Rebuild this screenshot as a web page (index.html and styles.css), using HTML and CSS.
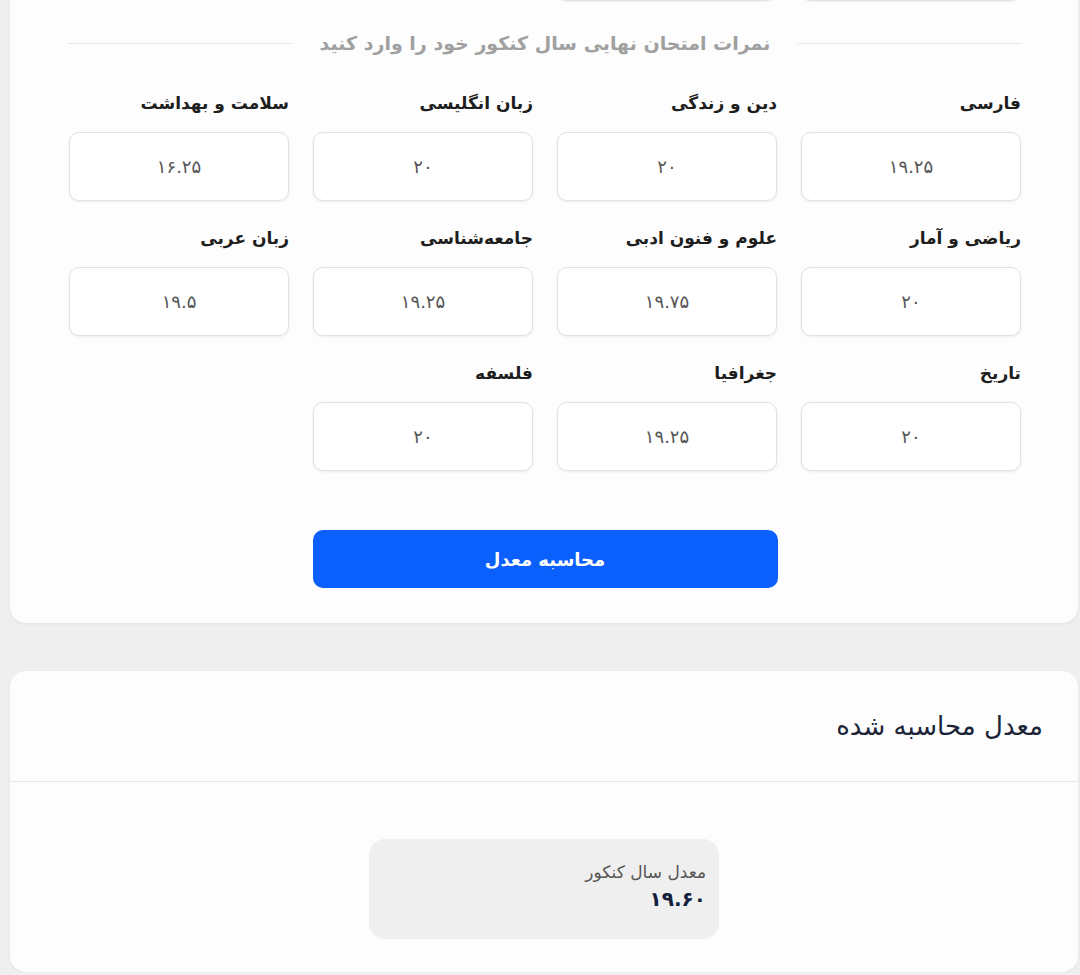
FILE: index.html
```html
<!DOCTYPE html>
<html lang="fa" dir="rtl">
<head>
<meta charset="utf-8">
<title>محاسبه معدل</title>
<link rel="stylesheet" href="styles.css">
</head>
<body>
<div class="page">
  <section class="card form-card">
    <div class="stubs">
      <div class="stub"></div>
      <div class="stub"></div>
    </div>
    <div class="divider"><span>نمرات امتحان نهایی سال کنکور خود را وارد کنید</span></div>
    <div class="grid">
      <label class="field"><span class="label">فارسی</span><input class="input" type="text" value="۱۹.۲۵"></label>
      <label class="field"><span class="label">دین و زندگی</span><input class="input" type="text" value="۲۰"></label>
      <label class="field"><span class="label">زبان انگلیسی</span><input class="input" type="text" value="۲۰"></label>
      <label class="field"><span class="label">سلامت و بهداشت</span><input class="input" type="text" value="۱۶.۲۵"></label>
      <label class="field"><span class="label">ریاضی و آمار</span><input class="input" type="text" value="۲۰"></label>
      <label class="field"><span class="label">علوم و فنون ادبی</span><input class="input" type="text" value="۱۹.۷۵"></label>
      <label class="field"><span class="label">جامعه‌شناسی</span><input class="input" type="text" value="۱۹.۲۵"></label>
      <label class="field"><span class="label">زبان عربی</span><input class="input" type="text" value="۱۹.۵"></label>
      <label class="field"><span class="label">تاریخ</span><input class="input" type="text" value="۲۰"></label>
      <label class="field"><span class="label">جغرافیا</span><input class="input" type="text" value="۱۹.۲۵"></label>
      <label class="field"><span class="label">فلسفه</span><input class="input" type="text" value="۲۰"></label>
    </div>
    <div class="actions">
      <button class="btn" type="button">محاسبه معدل</button>
    </div>
  </section>

  <section class="card result-card">
    <header class="result-head"><h2>معدل محاسبه شده</h2></header>
    <div class="result-body">
      <div class="result-box">
        <div class="result-label">معدل سال کنکور</div>
        <div class="result-value">۱۹.۶۰</div>
      </div>
    </div>
  </section>
</div>
</body>
</html>
```
FILE: styles.css
```css
* { box-sizing: border-box; }
html, body { margin: 0; padding: 0; }
body {
  background: #efefef;
  font-family: "DejaVu Sans", "Noto Sans", sans-serif;
  color: #1e1e1e;
  direction: rtl;
  overflow: hidden;
}
.page {
  padding: 0 2px 0 10px;
}
.card {
  background: #fdfdfd;
  border-radius: 16px;
  box-shadow: 0 1px 3px rgba(0,0,0,0.06);
}
.form-card {
  margin-top: -20px;
  padding: 0 57px 35px 59px;
  border-radius: 0 0 16px 16px;
}
.stubs {
  display: grid;
  grid-template-columns: repeat(4, 220px);
  column-gap: 24px;
}
.stub {
  height: 21px;
  border: 1px solid #e4e4e4;
  border-top: none;
  border-radius: 0 0 10px 10px;
  box-shadow: 0 1px 2px rgba(0,0,0,0.06);
  background: #fff;
}
.divider {
  margin-top: 27px;
  display: flex;
  align-items: center;
  gap: 28px;
  height: 30px;
}
.divider::before,
.divider::after {
  content: "";
  flex: 1;
  border-top: 1px dotted #d4d4d4;
}
.divider span {
  font-size: 19px;
  font-weight: bold;
  color: #a0a0a0;
  white-space: nowrap;
}
.grid {
  margin-top: 32px;
  display: grid;
  grid-template-columns: repeat(4, 220px);
  column-gap: 24px;
  row-gap: 24px;
}
.field {
  display: flex;
  flex-direction: column;
}
.label {
  line-height: 26px;
  height: 26px;
  font-size: 17px;
  font-weight: bold;
  color: #1e1e1e;
  margin-bottom: 16px;
}
.input {
  width: 220px;
  height: 69px;
  border: 1px solid #e2e2e2;
  border-radius: 10px;
  background: #fff;
  box-shadow: 0 1px 3px rgba(0,0,0,0.07);
  text-align: center;
  font-family: inherit;
  font-size: 18px;
  color: #555;
  padding: 0 10px;
  outline: none;
}
.actions {
  margin-top: 59px;
  display: flex;
  justify-content: center;
}
.btn {
  width: 465px;
  height: 58px;
  border: none;
  border-radius: 10px;
  background: #0b5ffd;
  color: #fff;
  font-family: inherit;
  font-size: 18px;
  font-weight: bold;
}
.result-card {
  margin-top: 48px;
  height: 301px;
}
.result-head {
  height: 111px;
  border-bottom: 1px solid #e6e6e6;
  display: flex;
  align-items: center;
  padding: 0 35px;
}
.result-head h2 {
  margin: 0;
  font-size: 26px;
  font-weight: normal;
  color: #1b2437;
}
.result-body {
  padding-top: 57px;
  display: flex;
  justify-content: center;
}
.result-box {
  width: 350px;
  height: 100px;
  background: #efefef;
  border-radius: 16px;
  padding: 21px 13px 0;
}
.result-label {
  font-size: 17px;
  line-height: 24px;
  color: #555;
}
.result-value {
  font-size: 20px;
  line-height: 30px;
  font-weight: bold;
  color: #14213d;
}
```
